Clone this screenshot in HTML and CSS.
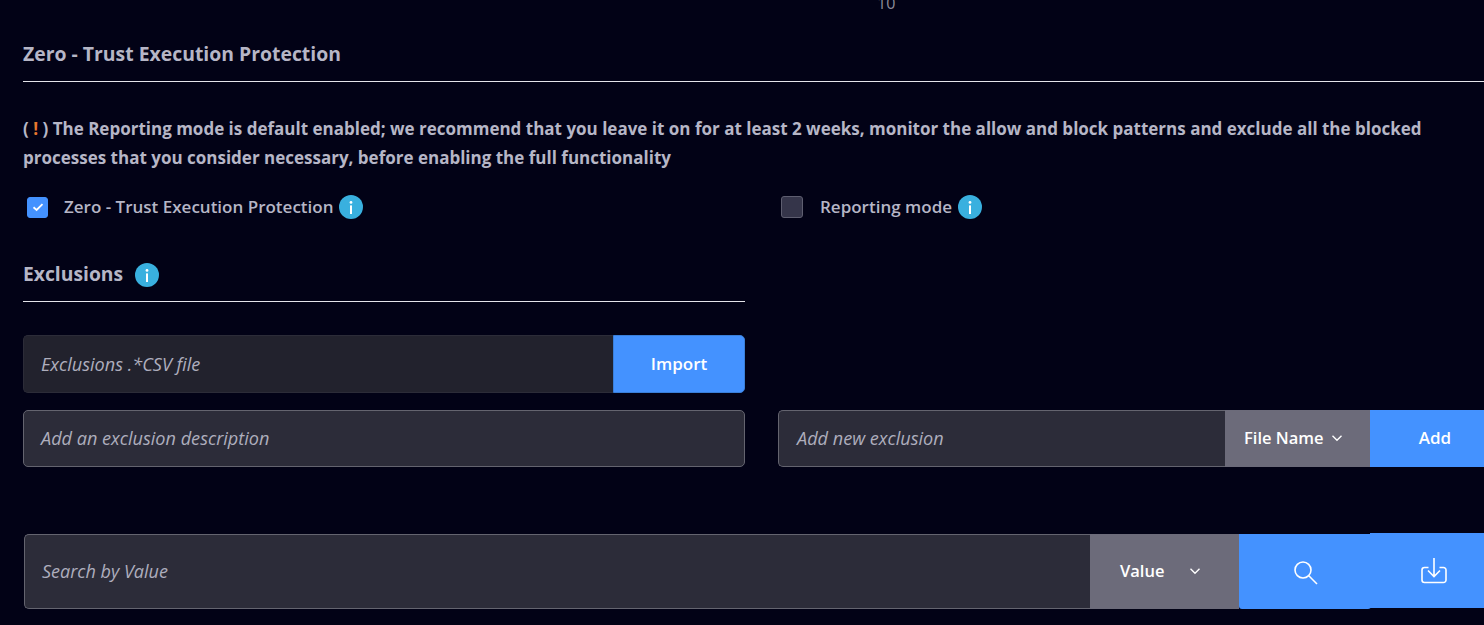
FILE: index.html
```html
<!DOCTYPE html>
<html lang="en">
<head>
<meta charset="utf-8">
<title>Zero - Trust Execution Protection</title>
<link rel="stylesheet" href="styles.css">
</head>
<body>
<main class="page">
  <div class="pager"><span class="pager-num">10</span></div>
  <h2 class="section-title">Zero - Trust Execution Protection</h2>
  <p class="notice">( <span class="bang">!</span> ) The Reporting mode is default enabled; we recommend that you leave it on for at least 2 weeks, monitor the allow and block patterns and exclude all the blocked processes that you consider necessary, before enabling the full functionality</p>
  <div class="options">
    <div class="option option-left">
      <span class="check check-on"><svg width="14" height="14" viewBox="0 0 14 14"><path d="M2.500 7.300 5.600 10 11.500 4.200" fill="none" stroke="#fff" stroke-width="1.8"/></svg></span>
      <span class="option-label">Zero - Trust Execution Protection</span>
      <svg class="info" width="24" height="24" viewBox="0 0 24 24"><circle cx="12" cy="12" r="12" fill="#39b0df"/><circle cx="12" cy="7.4" r="1.4" fill="#fff"/><rect x="11" y="10.4" width="2" height="8.6" fill="#fff"/></svg>
    </div>
    <div class="option option-right">
      <span class="check"></span>
      <span class="option-label">Reporting mode</span>
      <svg class="info" width="24" height="24" viewBox="0 0 24 24"><circle cx="12" cy="12" r="12" fill="#39b0df"/><circle cx="12" cy="7.4" r="1.4" fill="#fff"/><rect x="11" y="10.4" width="2" height="8.6" fill="#fff"/></svg>
    </div>
  </div>
  <div class="exclusions-head">
    <h3 class="sub-title">Exclusions</h3>
    <svg class="info" width="24" height="24" viewBox="0 0 24 24"><circle cx="12" cy="12" r="12" fill="#39b0df"/><circle cx="12" cy="7.4" r="1.4" fill="#fff"/><rect x="11" y="10.4" width="2" height="8.6" fill="#fff"/></svg>
  </div>
  <div class="import-row">
    <div class="field field-dark">Exclusions .*CSV file</div>
    <button class="btn btn-import">Import</button>
  </div>
  <div class="add-row">
    <div class="field field-desc">Add an exclusion description</div>
    <div class="add-group">
      <div class="field field-new">Add new exclusion</div>
      <div class="select select-file">File Name<svg width="12" height="12" viewBox="0 0 12 12"><path d="M1.5 3.8 6 8.2 10.5 3.8" fill="none" stroke="#fff" stroke-width="1.4"/></svg></div>
      <button class="btn btn-add">Add</button>
    </div>
  </div>
  <div class="search-row">
    <div class="field field-search">Search by Value</div>
    <div class="select select-value">Value<svg width="12" height="12" viewBox="0 0 12 12"><path d="M1.5 3.8 6 8.2 10.5 3.8" fill="none" stroke="#fff" stroke-width="1.4"/></svg></div>
    <button class="btn btn-search"><svg width="26" height="26" viewBox="0 0 26 26"><circle cx="11" cy="11" r="8" fill="none" stroke="#fff" stroke-width="1.6"/><path d="M16.800 16.800 25 25" stroke="#fff" stroke-width="1.6"/></svg></button>
    <button class="btn btn-download"><svg width="28" height="28" viewBox="0 0 28 28"><path d="M8.500 10.500H4.500a2.500 2.500 0 0 0-2.500 2.500v10a2.500 2.500 0 0 0 2.500 2.500h19a2.500 2.500 0 0 0 2.500-2.500v-10a2.500 2.500 0 0 0-2.500-2.500h-4" fill="none" stroke="#fff" stroke-width="1.6"/><path d="M14 1v18M8 13.500l6 6 6-6" fill="none" stroke="#fff" stroke-width="1.6"/></svg></button>
  </div>
</main>
</body>
</html>
```
FILE: styles.css
```css
* { box-sizing: border-box; }
html, body { margin: 0; height: 100%; overflow: hidden; }
body {
  background: #020216;
  color: #b6b6c6;
  font-family: "Open Sans", "Noto Sans", sans-serif;
}
.page { width: 1484px; height: 625px; overflow: hidden; padding-left: 23px; }
.pager { height: 11px; display: flex; align-items: flex-end; padding-left: 854px; overflow: hidden; }
.pager-num { font-size: 16px; line-height: 16px; color: #8d8d9b; }
.section-title { margin: 0; height: 71px; padding-top: 29px; border-bottom: 1px solid #e4e4ea; font-size: 19.4px; line-height: 27px; font-weight: 700; }
.notice { margin: 32px 0 0; width: 1420px; font-size: 17px; line-height: 29px; font-weight: 700; }
.bang { color: #e8772e; }
.options { display: flex; margin-top: 21px; height: 28px; align-items: center; }
.option { display: flex; align-items: center; padding-left: 4px; }
.option-left { width: 754px; flex: none; }
.option-right .option-label { margin-left: 17px; }
.check { width: 22px; height: 22px; border-radius: 3px; background: #35354a; border: 1px solid #5e5e70; display: flex; align-items: center; justify-content: center; flex: none; }
.check-on { width: 21px; height: 21px; background: #4492ff; border-color: #4492ff; }
.option-label { margin-left: 16px; margin-right: 6px; font-size: 17px; line-height: 24px; font-weight: 600; }
.info { display: block; flex: none; }
.exclusions-head { width: 722px; height: 62px; margin-top: 19px; padding-top: 20px; border-bottom: 1px solid #e4e4ea; display: flex; align-items: flex-start; gap: 12px; }
.sub-title { margin: 0; font-size: 19.3px; line-height: 27px; font-weight: 700; }
.exclusions-head .info { margin-top: 3px; }
.import-row { display: flex; width: 722px; height: 58px; margin-top: 33px; }
.field { display: flex; align-items: center; font-style: italic; font-size: 18.1px; color: #aeaebd; padding-left: 17px; padding-bottom: 2px; background: #2c2c39; border: 1px solid #64646f; border-radius: 5px; }
.field-dark { flex: 1; padding-bottom: 0; background: #22222d; border-color: #2c2c38; border-right: 0; border-radius: 5px 0 0 5px; }
.btn { border: 0; padding: 0 0 2px; margin: 0; flex: none; font-family: inherit; font-size: 17px; font-weight: 600; color: #fff; background: #4492ff; display: flex; align-items: center; justify-content: center; }
.btn-import { width: 132px; border: 1px solid #3a7fd8; border-radius: 0 5px 5px 0; }
.add-row { display: flex; height: 57px; margin-top: 17px; }
.field-desc { width: 722px; flex: none; }
.add-group { display: flex; margin-left: 33px; width: 722px; flex: none; }
.field-new { flex: 1; padding-left: 18px; border-right: 0; border-radius: 5px 0 0 5px; }
.select { display: flex; align-items: center; padding-bottom: 2px; background: #6c6b7a; color: #fff; font-size: 16.5px; font-weight: 600; flex: none; }
.select-file { width: 145px; padding-left: 19px; gap: 7px; }
.btn-add { width: 130px; }
.search-row { display: flex; height: 75px; margin: 67px 0 0 1px; width: 1474px; }
.field-search { width: 1066px; flex: none; font-size: 18px; border-right: 0; border-radius: 5px 0 0 5px; }
.select-value { width: 149px; padding-left: 30px; gap: 25px; }
.btn-search { width: 132px; padding: 0; border-radius: 0 0 3px 3px; }
.btn-download { width: 127px; height: 75px; padding: 0; margin: -1px 0 0 -1px; }
```
